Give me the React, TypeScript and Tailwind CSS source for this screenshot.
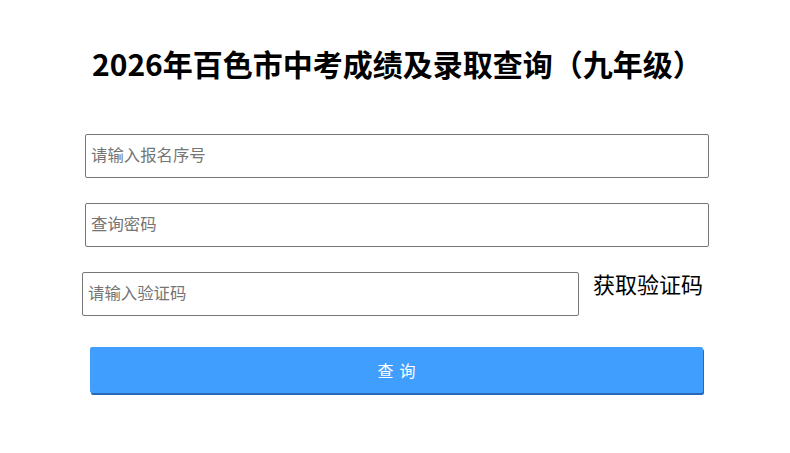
import React from "react";

const font = { fontFamily: '"Noto Sans CJK SC", "Noto Sans", sans-serif' };

export default function App() {
  return (
    <div className="w-[790px] h-[453px] bg-white relative" style={font}>
      <div className="flex flex-col pt-[38px]">
        <h1 className="text-[30px] leading-[50px] font-bold text-black pl-[92px] whitespace-nowrap">
          2026年百色市中考成绩及录取查询（九年级）
        </h1>
        <div className="flex flex-col pl-[85px] mt-[46px] gap-[25px]">
          <input
            className="w-[624px] h-[44px] border border-[#767676] rounded-[2px] pl-[5px] pb-[4px] text-[16.4px] text-black placeholder:text-[#757575] outline-none"
            placeholder="请输入报名序号"
          />
          <input
            className="w-[624px] h-[44px] border border-[#767676] rounded-[2px] pl-[5px] pb-[4px] text-[16.4px] text-black placeholder:text-[#757575] outline-none"
            placeholder="查询密码"
          />
          <div className="flex items-start -ml-[3px]">
            <input
              className="w-[497px] h-[44px] border border-[#767676] rounded-[2px] pl-[5px] pb-[4px] text-[16.4px] text-black placeholder:text-[#757575] outline-none"
              placeholder="请输入验证码"
            />
            <span className="ml-[14px] mt-[-5px] text-[22px] leading-[32px] text-black whitespace-nowrap">
              获取验证码
            </span>
          </div>
        </div>
        <div className="pl-[90px] mt-[31px]">
          <button className="w-[613px] h-[46px] bg-[#409eff] rounded-[2px] shadow-[1px_2px_0_#2868b8] text-white text-[16px] tracking-[6px] pl-[6px]">
            查询
          </button>
        </div>
      </div>
    </div>
  );
}
